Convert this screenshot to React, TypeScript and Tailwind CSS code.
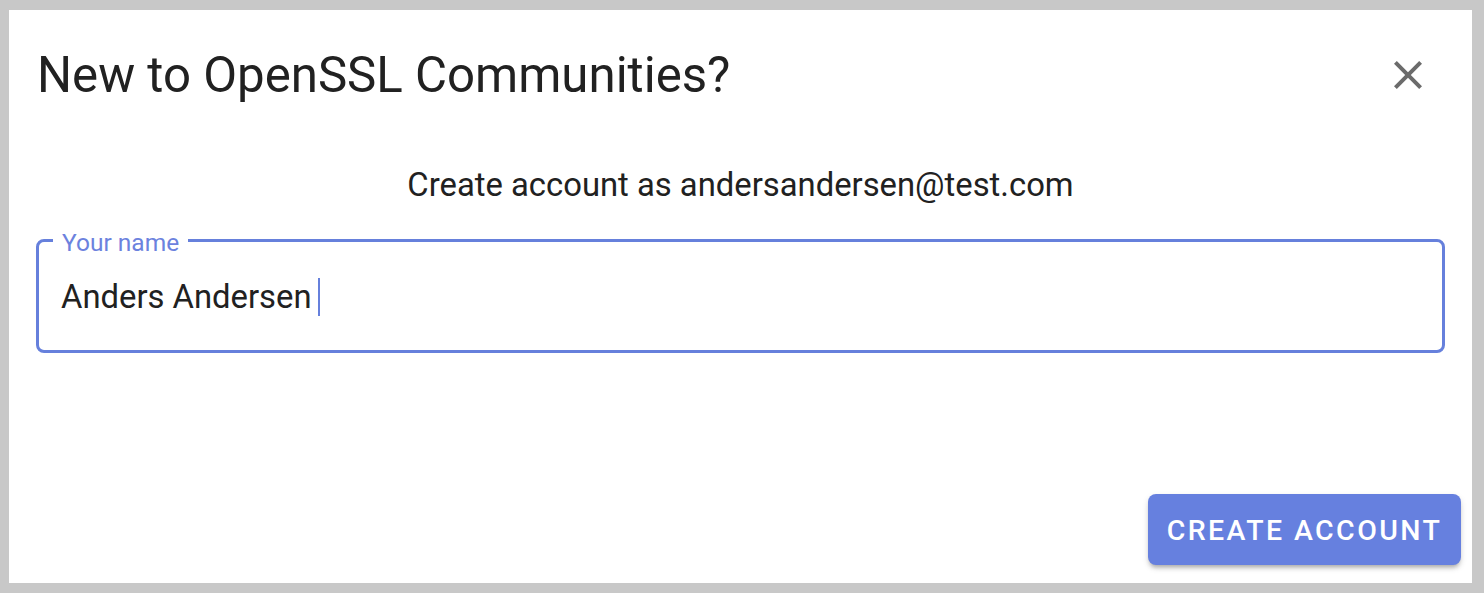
import React from 'react';

function CloseIcon() {
  return (
    <svg viewBox="0 0 24 24" className="w-12 h-12" fill="#6b6b6b">
      <path d="M19 6.41 17.59 5 12 10.59 6.41 5 5 6.41 10.59 12 5 17.59 6.41 19 12 13.41 17.59 19 19 17.59 13.41 12z" />
    </svg>
  );
}

export default function App() {
  return (
    <div className="w-full h-[593px] bg-[#c8c8c8] pt-[10px] pl-[9px] pr-[12px] pb-[10px] flex font-['Roboto',sans-serif]">
      <div className="flex-1 bg-white flex flex-col">
        {/* Title */}
        <div className="flex items-center justify-between pt-[37px] pl-[28px] pr-[40px]">
          <h2 className="text-[49.2px] leading-[56px] text-[#212121] font-normal">New to OpenSSL Communities?</h2>
          <CloseIcon />
        </div>

        <p className="mt-[62px] text-center text-[32.8px] leading-[40px] text-[#212121]">
          Create account as andersandersen@test.com
        </p>

        {/* Name field */}
        <fieldset className="mt-[20px] mx-[27px] border-[3px] border-[#6680dc] rounded-[8px] pl-[22px] pr-[22px] h-[128px]">
          <legend className="ml-[-8px] px-[9px] pt-[6px] text-[24.5px] leading-[24px] text-[#6c82de]">Your name</legend>
          <div className="flex items-center pt-[22px]">
            <span className="text-[32.8px] leading-[40px] text-[#212121]">Anders Andersen</span>
            <span className="ml-[6px] w-[2px] h-[38px] bg-[#6680dc]"></span>
          </div>
        </fieldset>

        <div className="flex-1" />

        <div className="flex justify-end pr-[11px] pb-[18px]">
          <button className="w-[313px] h-[71px] pt-[3px] rounded-[8px] bg-[#6680df] text-white text-[28.5px] font-medium tracking-[0.085em] uppercase shadow-[0_4px_4px_-2px_rgba(0,0,0,0.25),0_3px_6px_0_rgba(0,0,0,0.14)]">
            Create account
          </button>
        </div>
      </div>
    </div>
  );
}
